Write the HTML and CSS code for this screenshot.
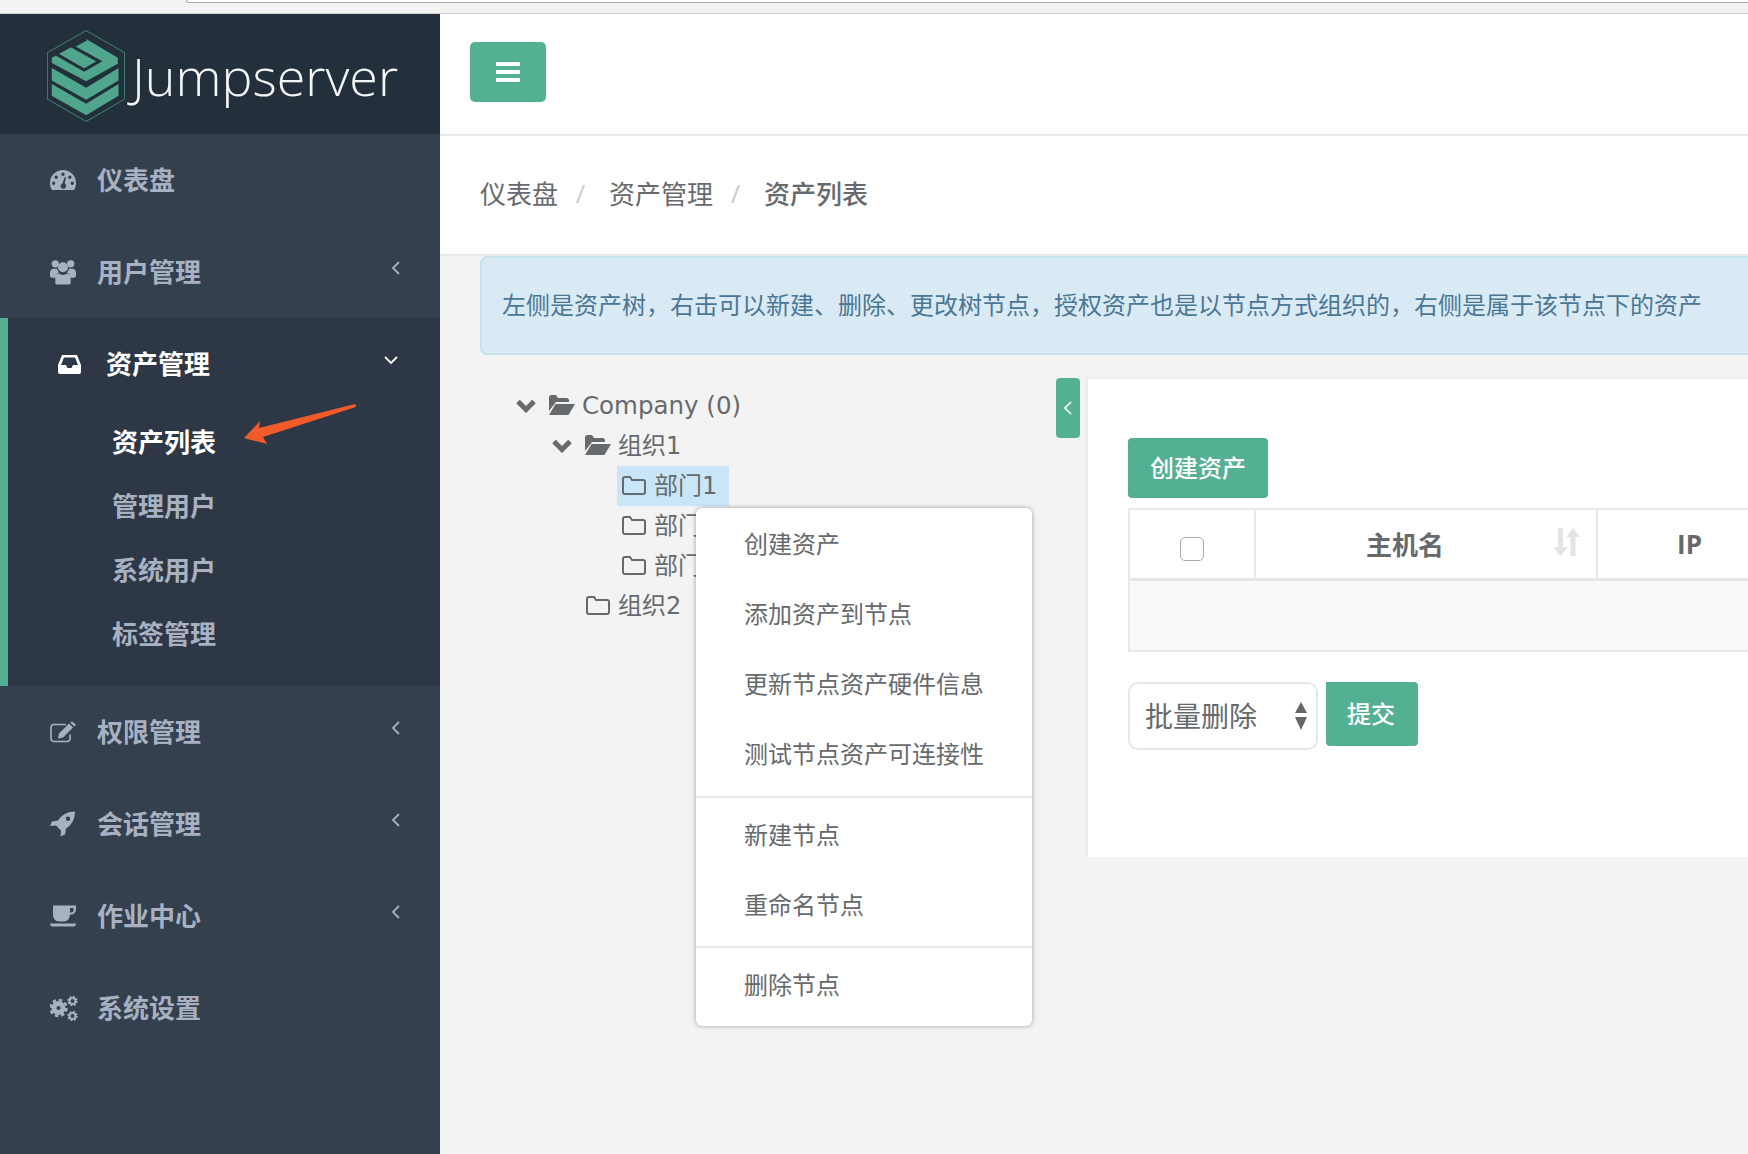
FILE: index.html
```html
<!DOCTYPE html>
<html lang="zh-CN">
<head>
<meta charset="utf-8">
<title>Jumpserver</title>
<link rel="stylesheet" href="styles.css">
</head>
<body>
<div class="browser-strip"><div class="address-bar"></div></div>
<div class="app">
  <aside class="sidebar">
    <div class="logo">
      <svg class="logo-mark" viewBox="52 45 231 273">
        <polygon class="logo-hex" points="168,47 282,112 282,250 168,316 53,250 53,112"/>
        <polygon class="logo-green" points="168,72 262,127 262,145 168,197 66,143 66,127"/>
        <polyline class="logo-cut" points="72,112 162,164 207,138 128,94 168,72"/>
        <polygon class="logo-green" points="66,158 168,216 264,158 264,195 168,252 66,195"/>
        <polygon class="logo-green" points="66,205 168,264 264,205 264,240 168,298 66,240"/>
      </svg>
      <span class="logo-text">Jumpserver</span>
    </div>
    <nav class="nav">
      <a class="nav-item">
        <svg class="nav-icon" viewBox="0 0 26 20"><path fill-rule="evenodd" d="M13 0A13 13 0 0 0 0 13c0 2.600.7 5 2 7h22c1.300-2 2-4.400 2-7A13 13 0 0 0 13 0zM13 2.500a1.700 1.700 0 1 1 0 3.400 1.700 1.700 0 0 1 0-3.400zM6.200 5.600a1.700 1.700 0 1 1 0 3.400 1.700 1.700 0 0 1 0-3.400zM19.800 5.600a1.700 1.700 0 1 1 0 3.400 1.700 1.700 0 0 1 0-3.400zM3.700 11.500a1.700 1.700 0 1 1 0 3.400 1.700 1.700 0 0 1 0-3.400zM22.300 11.500a1.700 1.700 0 1 1 0 3.400 1.700 1.700 0 0 1 0-3.400zM14.800 7l1.200.3-1.300 6.300a2.800 2.800 0 1 1-2.300-.2z"/></svg>
        <span>仪表盘</span>
      </a>
      <a class="nav-item">
        <svg class="nav-icon" viewBox="0 0 27 26"><circle cx="5.500" cy="4.500" r="3.800"/><circle cx="21.500" cy="4.500" r="3.800"/><circle cx="13.500" cy="8" r="5.200"/><path d="M0 17v-3c0-3 1.500-4.500 4-4.500h3.500c.3 2 1 3.200 2 4-2.200 1-3.500 2.500-3.700 5.500H2c-1.200 0-2-.8-2-2zM27 17v-3c0-3-1.500-4.500-4-4.500h-3.500c-.3 2-1 3.200-2 4 2.200 1 3.500 2.500 3.700 5.500H25c1.200 0 2-.8 2-2zM7 26c-.8 0-1.500-.7-1.500-2v-3c0-4 1.500-6.500 4-6.500 1 1 2.500 1.500 4 1.500s3-.5 4-1.500c2.500 0 4 2.500 4 6.500v3c0 1.300-.7 2-1.500 2z"/></svg>
        <span>用户管理</span>
        <svg class="chev chev-left" viewBox="0 0 10 16"><polyline points="8,2 2,8 8,14"/></svg>
      </a>
      <div class="nav-group">
        <a class="nav-item nav-item-open">
          <svg class="nav-icon nav-icon-inbox" viewBox="0 0 23 19"><path fill-rule="evenodd" d="M4 0h15l4 10v7q0 2-2 2H2q-2 0-2-2v-7zM6 2.500l-3 7.500h5l1.500 3h4l1.500-3h5l-3-7.500z"/></svg>
          <span>资产管理</span>
          <svg class="chev chev-down" viewBox="0 0 16 10"><polyline points="2,2 8,8 14,2"/></svg>
        </a>
        <a class="sub-item sub-item-active">资产列表</a>
        <a class="sub-item">管理用户</a>
        <a class="sub-item">系统用户</a>
        <a class="sub-item">标签管理</a>
      </div>
      <a class="nav-item">
        <svg class="nav-icon" viewBox="0 0 26 21"><path class="icon-line" d="M20 13v4a3 3 0 0 1-3 3H4a3 3 0 0 1-3-3V6a3 3 0 0 1 3-3h12"/><path d="M9 12l-1 5 5-1L23 6l-4-4zM20.200 1l4 4L26 3.200 22 0z"/></svg>
        <span>权限管理</span>
        <svg class="chev chev-left" viewBox="0 0 10 16"><polyline points="8,2 2,8 8,14"/></svg>
      </a>
      <a class="nav-item">
        <svg class="nav-icon" viewBox="0 0 26 25"><path fill-rule="evenodd" d="M25 0c-7 0-13 3-17 9l-6 1-2 4.500 6-.5 5 5-.5 6 4.500-2 1-6c6-4 9-10 9-17zM18 5a2.200 2.200 0 1 1 0 4.400A2.200 2.200 0 0 1 18 5z"/></svg>
        <span>会话管理</span>
        <svg class="chev chev-left" viewBox="0 0 10 16"><polyline points="8,2 2,8 8,14"/></svg>
      </a>
      <a class="nav-item">
        <svg class="nav-icon" viewBox="0 0 26 21"><path fill-rule="evenodd" d="M3 0h23v3.500c0 3.500-2 5.500-5 5.500h-1c-.5 4-2.500 7-6 7H9c-3.500 0-6-3-6-7zM20 2.500V7h1c1.500 0 2.500-1 2.500-2.300V2.500zM0 18h26c0 1.800-1 3-2.500 3h-21C1 21 0 19.800 0 18z"/></svg>
        <span>作业中心</span>
        <svg class="chev chev-left" viewBox="0 0 10 16"><polyline points="8,2 2,8 8,14"/></svg>
      </a>
      <a class="nav-item">
        <svg class="nav-icon nav-icon-gears" viewBox="0 0 28 26">
          <circle class="gear-ring" cx="8.500" cy="13" r="4.500"/><circle class="gear-teeth" cx="8.500" cy="13" r="8"/>
          <circle class="gear-ring-sm" cx="22.500" cy="6" r="3"/><circle class="gear-teeth-sm" cx="22.500" cy="6" r="4.400"/>
          <circle class="gear-ring-sm" cx="22.500" cy="21" r="3"/><circle class="gear-teeth-sm" cx="22.500" cy="21" r="4.400"/>
        </svg>
        <span>系统设置</span>
      </a>
    </nav>
    <svg class="annotation-arrow" viewBox="0 0 120 44"><path d="M0 34L16 17 15 24 110 .2c2-.5 3 2 1 3L19 33l4 7z"/></svg>
  </aside>

  <main class="main">
    <header class="topbar">
      <button class="btn menu-btn" type="button"><i></i><i></i><i></i></button>
    </header>
    <div class="breadcrumb">
      <span>仪表盘</span><span class="sep">/</span><span>资产管理</span><span class="sep">/</span><span class="crumb-current">资产列表</span>
    </div>
    <div class="alert">左侧是资产树，右击可以新建、删除、更改树节点，授权资产也是以节点方式组织的，右侧是属于该节点下的资产</div>
    <div class="content">
      <section class="tree">
        <div class="tree-row level-0">
          <svg class="tree-chev" viewBox="0 0 22 16"><polyline points="3,3.500 11,11.500 19,3.500"/></svg>
          <span class="node"><svg class="folder" viewBox="0 0 26 22"><path d="M0 3.500Q0 1 2.500 1H7l2 3h8.500Q20 4 20 6.500V8H7L0 17zM6.500 10H26l-6.500 11H0z"/></svg><span class="node-latin">Company (0)</span></span>
        </div>
        <div class="tree-row level-1">
          <svg class="tree-chev" viewBox="0 0 22 16"><polyline points="3,3.500 11,11.500 19,3.500"/></svg>
          <span class="node"><svg class="folder" viewBox="0 0 26 22"><path d="M0 3.500Q0 1 2.500 1H7l2 3h8.500Q20 4 20 6.500V8H7L0 17zM6.500 10H26l-6.500 11H0z"/></svg><span class="label">组织1</span></span>
        </div>
        <div class="tree-row level-2">
          <span class="tree-slot"></span>
          <span class="node node-selected"><svg class="folder folder-closed" viewBox="0 0 24 20"><path d="M3 2h5l2 3h11a2 2 0 0 1 2 2v10a2 2 0 0 1-2 2H3a2 2 0 0 1-2-2V4a2 2 0 0 1 2-2z"/></svg><span class="label">部门1</span></span>
        </div>
        <div class="tree-row level-2">
          <span class="tree-slot"></span>
          <span class="node"><svg class="folder folder-closed" viewBox="0 0 24 20"><path d="M3 2h5l2 3h11a2 2 0 0 1 2 2v10a2 2 0 0 1-2 2H3a2 2 0 0 1-2-2V4a2 2 0 0 1 2-2z"/></svg><span class="label">部门2</span></span>
        </div>
        <div class="tree-row level-2">
          <span class="tree-slot"></span>
          <span class="node"><svg class="folder folder-closed" viewBox="0 0 24 20"><path d="M3 2h5l2 3h11a2 2 0 0 1 2 2v10a2 2 0 0 1-2 2H3a2 2 0 0 1-2-2V4a2 2 0 0 1 2-2z"/></svg><span class="label">部门3</span></span>
        </div>
        <div class="tree-row level-1">
          <span class="tree-slot"></span>
          <span class="node"><svg class="folder folder-closed" viewBox="0 0 24 20"><path d="M3 2h5l2 3h11a2 2 0 0 1 2 2v10a2 2 0 0 1-2 2H3a2 2 0 0 1-2-2V4a2 2 0 0 1 2-2z"/></svg><span class="label">组织2</span></span>
        </div>
        <ul class="context-menu">
          <li>创建资产</li>
          <li>添加资产到节点</li>
          <li>更新节点资产硬件信息</li>
          <li>测试节点资产可连接性</li>
          <li class="divider"></li>
          <li>新建节点</li>
          <li>重命名节点</li>
          <li class="divider divider-last"></li>
          <li>删除节点</li>
        </ul>
      </section>
      <div class="toggle"><svg viewBox="0 0 10 16"><polyline points="8,2 2,8 8,14"/></svg></div>
      <section class="panel">
        <button class="btn create-btn" type="button">创建资产</button>
        <table class="grid">
          <thead>
            <tr>
              <th class="col-check"><span class="checkbox"></span></th>
              <th class="col-host">主机名<svg class="sort" viewBox="0 0 27 28"><path d="M5 0h5v19h5L7.500 28 0 19h5zM20 0l7 9h-4.500v19h-5V9H13z"/></svg></th>
              <th class="col-ip">IP</th>
            </tr>
          </thead>
          <tbody>
            <tr><td colspan="3"></td></tr>
          </tbody>
        </table>
        <div class="bulk">
          <div class="select">
            <span>批量删除</span>
            <svg viewBox="0 0 14 28"><path d="M7 0l6 11H1zM1 15h12L7 28z"/></svg>
          </div>
          <button class="btn submit-btn" type="button">提交</button>
        </div>
      </section>
    </div>
  </main>
</div>
</body>
</html>
```

FILE: styles.css
```css
* { box-sizing: border-box; }
html, body { margin: 0; height: 100%; }
body {
  width: 1748px;
  height: 1154px;
  overflow: hidden;
  background: #f3f3f4;
  color: #676a6c;
  font-family: "Open Sans", "Noto Sans CJK SC", sans-serif;
  font-size: 24px;
}

.browser-strip {
  height: 14px;
  background: #f2f2f2;
  border-bottom: 1px solid #d4d4d4;
}
.address-bar {
  height: 3px;
  margin-left: 186px;
  background: #fff;
  border: 1px solid #aaa;
  border-top: 0;
  border-right: 0;
  border-bottom-left-radius: 4px;
}

.app { display: flex; height: 1140px; }

/* Sidebar */
.sidebar {
  position: relative;
  flex: 0 0 440px;
  background: #34404e;
  color: #a7b1c2;
}
.logo {
  display: flex;
  align-items: center;
  height: 120px;
  padding: 3px 0 0 47px;
  background: #232f3a;
}
.logo-mark { width: 78px; height: 92px; }
.logo-hex { fill: none; stroke: #3f7f75; stroke-width: 3; }
.logo-green { fill: #4fa68c; }
.logo-cut { fill: none; stroke: #232f3a; stroke-width: 9; }
.logo-text {
  margin: 0 0 0 7px;
  color: #f4f5f5;
  font-family: "Open Sans", sans-serif;
  font-weight: 300;
  font-size: 52px;
  line-height: 1;
}
.nav-item {
  display: flex;
  align-items: center;
  height: 92px;
  padding-left: 50px;
  font-size: 26px;
  font-weight: 700;
}
.nav-item > span { padding-bottom: 2px; }
.nav-icon { flex: 0 0 26px; width: 26px; height: 26px; margin-right: 21px; fill: #a7b1c2; }
.nav-icon-gears { flex-basis: 28px; width: 28px; margin-right: 19px; }
.icon-line { fill: none; stroke: #a7b1c2; stroke-width: 1.6; }
.gear-ring { fill: none; stroke: #a7b1c2; stroke-width: 5; }
.gear-teeth { fill: none; stroke: #a7b1c2; stroke-width: 2.600; stroke-dasharray: 3.600 2.680; }
.gear-ring-sm { fill: none; stroke: #a7b1c2; stroke-width: 2; }
.gear-teeth-sm { fill: none; stroke: #a7b1c2; stroke-width: 1.600; stroke-dasharray: 1.800 1.650; }
.chev {
  margin-left: auto;
  margin-bottom: 8px;
  fill: none;
  stroke: #a7b1c2;
  stroke-width: 1.800;
}
.chev-left { width: 10px; height: 16px; margin-right: 39px; }
.chev-down { width: 16px; height: 10px; margin-right: 41px; stroke: #fff; }

.nav-group {
  padding-bottom: 20px;
  background: #2d3745;
  border-left: 8px solid #52b193;
}
.nav-item-open { color: #fff; }
.nav-icon-inbox { flex-basis: 23px; width: 23px; height: 19px; margin-right: 25px; fill: #fff; }
.sub-item {
  display: flex;
  align-items: center;
  height: 64px;
  padding-left: 104px;
  padding-bottom: 2px;
  font-size: 26px;
  font-weight: 700;
}
.sub-item-active { color: #fff; }
.annotation-arrow {
  position: absolute;
  left: 244px;
  top: 390px;
  width: 120px;
  height: 44px;
  fill: #f15a2b;
}

/* Main */
.main { flex: 1; min-width: 0; overflow: hidden; }
.topbar {
  display: flex;
  align-items: center;
  height: 122px;
  padding-left: 30px;
  padding-bottom: 4px;
  background: #fff;
  border-bottom: 2px solid #e7eaec;
}
.btn {
  border: 0;
  background: #53b092;
  color: #fff;
  font: inherit;
  padding: 0;
}
.menu-btn {
  display: flex;
  flex-direction: column;
  align-items: center;
  justify-content: center;
  gap: 4px;
  width: 76px;
  height: 60px;
  border-radius: 5px;
}
.menu-btn i { display: block; width: 24px; height: 4px; background: #fff; }
.breadcrumb {
  display: flex;
  align-items: center;
  height: 120px;
  padding-left: 40px;
  padding-bottom: 4px;
  background: #fff;
  border-bottom: 2px solid #e7eaec;
  font-size: 26px;
}
.sep { width: 51px; padding-right: 6px; text-align: center; color: #ccc; font-size: 26px; }
.crumb-current { font-weight: 500; }

.alert {
  display: flex;
  align-items: center;
  width: 1400px;
  height: 99px;
  margin-left: 40px;
  padding-left: 20px;
  padding-bottom: 4px;
  background: #daeaf4;
  border: 2px solid #c8e3ec;
  border-radius: 7px;
  color: #4a7796;
  font-size: 24px;
  white-space: nowrap;
}

.content { display: flex; margin-top: 23px; }

/* Tree */
.tree {
  position: relative;
  flex: 0 0 616px;
  padding-top: 8px;
  font-family: "DejaVu Sans", "Noto Sans CJK SC", sans-serif;
}
.tree-row { display: flex; align-items: center; height: 40px; }
.level-0 { padding-left: 76px; }
.level-1 { padding-left: 112px; }
.level-2 { padding-left: 148px; }
.tree-chev {
  flex: 0 0 22px;
  width: 22px;
  height: 16px;
  margin: 0 8px 0 -1px;
  fill: none;
  stroke: #676a6c;
  stroke-width: 5;
}
.tree-slot { flex: 0 0 29px; }
.node {
  display: flex;
  align-items: center;
  gap: 7px;
  height: 40px;
  padding: 0 12px 0 4px;
}
.label { padding-bottom: 5px; }
.node-latin { font-size: 24.500px; padding-bottom: 2px; }
.node-selected { background: #c9e6f8; }
.folder { width: 26px; height: 22px; margin-bottom: 2px; fill: #676a6c; }
.folder-closed { padding-left: 1px; padding-right: 1px; fill: none; stroke: #676a6c; stroke-width: 2; }

.context-menu {
  position: absolute;
  left: 256px;
  top: 130px;
  width: 336px;
  height: 518px;
  margin: 0;
  padding: 3px 0;
  list-style: none;
  background: #fff;
  border-radius: 6px;
  box-shadow: 0 0 4px rgba(70, 70, 90, .5);
  font-family: "Open Sans", "Noto Sans CJK SC", sans-serif;
  font-size: 24px;
}
.context-menu li {
  display: flex;
  align-items: center;
  height: 70px;
  padding: 0 0 7px 48px;
}
.context-menu .divider {
  height: 2px;
  margin: 5px 0 4px;
  padding: 0;
  background: #e7e7ea;
}
.context-menu .divider-last { margin-top: 4px; }

/* Toggle + panel */
.toggle {
  display: flex;
  align-items: center;
  justify-content: center;
  flex: 0 0 24px;
  height: 60px;
  background: #53b092;
  border-radius: 4px;
}
.toggle svg { width: 10px; height: 16px; fill: none; stroke: #fff; stroke-width: 1.600; }
.panel {
  flex: 0 0 662px;
  height: 480px;
  margin: -1px 0 0 6px;
  padding: 59px 0 0 40px;
  overflow: hidden;
  background: #fff;
  border-top: 2px solid #ececef;
  border-left: 2px solid #ececef;
}
.create-btn {
  display: block;
  width: 140px;
  height: 60px;
  padding-bottom: 4px;
  border-radius: 4px;
  font-size: 24px;
  font-weight: 500;
}
.grid {
  width: 653px;
  margin-top: 10px;
  border-collapse: separate;
  border-spacing: 0;
  table-layout: fixed;
  border-left: 2px solid #e7eaec;
}
.grid th {
  position: relative;
  height: 73px;
  padding: 0;
  border-top: 2px solid #e7eaec;
  border-right: 2px solid #e7eaec;
  border-bottom: 3px solid #e7e7e7;
  font-size: 26px;
  font-weight: 700;
  text-align: center;
}
.col-check { width: 126px; }
.grid .col-host { width: 342px; padding-right: 42px; }
.col-ip { width: 185px; }
.grid td {
  height: 71px;
  padding: 0;
  background: #f9f9f9;
  border-bottom: 2px solid #e7eaec;
}
.checkbox {
  display: inline-block;
  width: 24px;
  height: 24px;
  margin-top: 4px;
  vertical-align: middle;
  background: #fff;
  border: 1.500px solid #aaa;
  border-radius: 5px;
}
.sort {
  position: absolute;
  right: 16px;
  top: 18px;
  width: 27px;
  height: 28px;
  fill: #e4e4e4;
}
.bulk { display: flex; gap: 8px; margin-top: 30px; align-items: flex-start; }
.select {
  display: flex;
  align-items: center;
  justify-content: space-between;
  width: 190px;
  height: 68px;
  padding: 0 8px 2px 15px;
  background: #fff;
  border: 2px solid #e5e6e7;
  border-radius: 10px;
  font-size: 28px;
}
.select svg { width: 14px; height: 28px; margin-top: 2px; fill: #666; }
.submit-btn {
  width: 92px;
  height: 64px;
  padding: 0 2px 4px 0;
  border-radius: 0 4px 4px 4px;
  font-size: 24px;
  font-weight: 500;
}
```
